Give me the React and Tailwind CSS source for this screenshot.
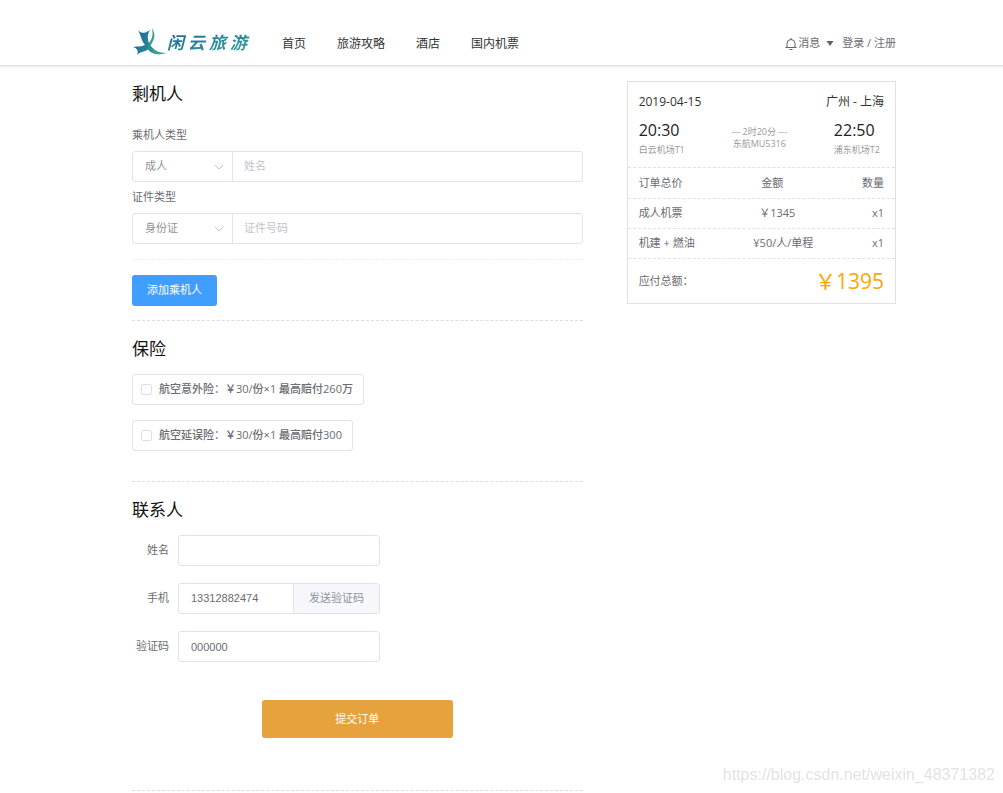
import React from "react";

const NAV = ["首页", "旅游攻略", "酒店", "国内机票"];

const INSURANCES = [
  { name: "航空意外险", detail: "￥30/份×1 最高赔付260万" },
  { name: "航空延误险", detail: "￥30/份×1 最高赔付300" },
];

const ROWS = [
  ["成人机票", "￥1345", "x1"],
  ["机建 + 燃油", "¥50/人/单程", "x1"],
];

function Logo() {
  return (
    <a href="#" aria-label="闲云旅游" className="flex items-center">
      <svg viewBox="0 0 35 30" className="h-[30px] w-[35px] shrink-0" aria-hidden="true">
        <defs>
          <linearGradient id="bird" x1="0" y1="0" x2="1" y2="0.4">
            <stop offset="0" stopColor="#1d5a9c" />
            <stop offset="0.5" stopColor="#247f96" />
            <stop offset="1" stopColor="#3fa894" />
          </linearGradient>
        </defs>
        <path
          fill="url(#bird)"
          d="M6 3C9 6.500 12 7 18 3C15 8 15.500 12 17 16C20 22 26 26 34 26C26 29 19 27 16 22.500C13 25 9 24 5 28C7 24 5 21 1 20C6 19 9 20 13 18C9 13 9 8 6 3Z"
        />
        <path fill="url(#bird)" d="M20 1C25.500 9 21 17.500 13 23.500L12 21C19 16 22 9 20 1Z" />
      </svg>
      <span className="flex gap-1 bg-gradient-to-br from-[#1f5f9e] to-[#3aa893] bg-clip-text pr-1 font-['Noto_Sans_CJK_SC',sans-serif] text-[17px] leading-6 font-bold text-transparent italic">
        <span>闲</span>
        <span>云</span>
        <span>旅</span>
        <span>游</span>
      </span>
    </a>
  );
}

function Chevron() {
  return (
    <svg viewBox="0 0 10 6" className="pointer-events-none absolute top-3 right-2 h-1.5 w-2.5" fill="none" stroke="#c0c4cc" aria-hidden="true">
      <path d="M1 1L5 5L9 1" />
    </svg>
  );
}

function PairField({ id, label, option, placeholder }) {
  return (
    <div>
      <label htmlFor={id} className="block leading-5">{label}</label>
      <div className="mt-1.5 flex h-[31px] rounded-[3px] border border-[#e0e3e9]">
        <div className="relative w-[100px] shrink-0 border-r border-[#e0e3e9]">
          <select aria-label={label} className="h-full w-full appearance-none bg-transparent pl-3 text-[#909399] outline-none">
            <option>{option}</option>
          </select>
          <Chevron />
        </div>
        <input id={id} placeholder={placeholder} className="min-w-0 flex-1 bg-transparent px-[11px] outline-none placeholder:text-[#c0c4cc]" />
      </div>
    </div>
  );
}

function Title({ children }) {
  return <h2 className="text-[17px] leading-6 text-[#111]">{children}</h2>;
}

function Header() {
  return (
    <header className="border-b border-[#dddddd] bg-white shadow-[0_2px_0_#f3f3f3]">
      <div className="flex h-[65px] items-center pt-[18px] pr-[107px] pl-[132px]">
        <Logo />
        <nav className="ml-[31px] flex gap-[31px] pt-1 text-[12px] text-[#333]">
          {NAV.map((item) => (
            <a key={item} href="#">{item}</a>
          ))}
        </nav>
        <div className="ml-auto flex items-center pt-1">
          <button type="button" className="flex items-center">
            <svg viewBox="0 0 14 14" className="h-3.5 w-3.5" fill="none" stroke="#606266" aria-hidden="true">
              <path d="M1.500 10.500H12.500M3 10.500V6.500A4 4 0 0 1 11 6.500V10.500M7 1V2.500M5.500 12.500H8.500" />
            </svg>
            消息
            <svg viewBox="0 0 8 5" className="ml-1.5 h-[5px] w-2" fill="#606266" aria-hidden="true">
              <path d="M0.500 0H7.500L4 5Z" />
            </svg>
          </button>
          <a href="#" className="ml-2">登录 / 注册</a>
        </div>
      </div>
    </header>
  );
}

function Summary() {
  const line = "flex items-center justify-between border-t border-dashed border-[#e2e2e2] px-[11px]";
  return (
    <aside className="self-start border border-[#e0e0e0]">
      <div className="px-[11px] pt-2.5 pb-[9px]">
        <div className="flex justify-between text-[12px] leading-5 text-[#333]">
          <span>2019-04-15</span>
          <span>广州 - 上海</span>
        </div>
        <div className="mt-1.5 flex items-center justify-between text-[9px] text-[#999]">
          <div>
            <div className="text-[16px] leading-6 text-[#222]">20:30</div>
            <div className="leading-4">白云机场T1</div>
          </div>
          <div className="text-center leading-3">
            <div>--- 2时20分 ---</div>
            <div>东航MU5316</div>
          </div>
          <div className="pr-1">
            <div className="text-[16px] leading-6 text-[#222]">22:50</div>
            <div className="leading-4">浦东机场T2</div>
          </div>
        </div>
      </div>
      <table className="block w-full">
        <thead className="block">
          <tr className={`h-[31px] ${line}`}>
            <th className="font-normal">订单总价</th>
            <th className="font-normal">金额</th>
            <th className="font-normal">数量</th>
          </tr>
        </thead>
        <tbody className="block">
          {ROWS.map(([name, price, count]) => (
            <tr key={name} className={`h-[30px] ${line}`}>
              <td>{name}</td>
              <td>{price}</td>
              <td>{count}</td>
            </tr>
          ))}
        </tbody>
      </table>
      <div className={`h-[45px] ${line}`}>
        <span>应付总额：</span>
        <span className="text-[21px] leading-8 text-[#ffa500]">￥1395</span>
      </div>
    </aside>
  );
}

export default function App() {
  const box = "h-[31px] rounded-[3px] border border-[#e0e3e9] bg-white px-3 font-['Liberation_Sans',sans-serif] outline-none";
  const row = "grid grid-cols-[37px_minmax(0,202px)] items-center gap-[9px]";
  return (
    <div className="min-h-screen bg-white font-['Open_Sans','Noto_Sans_CJK_SC',sans-serif] text-[11px] text-[#6a6c70]">
      <Header />
      <main className="grid grid-cols-[450fr_269fr] gap-x-11 pt-[15px] pr-[107px] pl-[132px]">
        <div className="pt-px">
          <section>
            <Title>剩机人</Title>
            <div className="mt-[19px] flex flex-col gap-[5px] border-b border-dashed border-[#eeeeee] pb-[15px]">
              <PairField id="passenger" label="乘机人类型" option="成人" placeholder="姓名" />
              <PairField id="document" label="证件类型" option="身份证" placeholder="证件号码" />
            </div>
            <button type="button" className="mt-[15px] h-[31px] rounded-[3px] bg-[#409eff] px-[15px] text-white">添加乘机人</button>
          </section>

          <section className="mt-[14px] border-t border-dashed border-[#dddddd] pt-4">
            <Title>保险</Title>
            <div className="mt-[13px] flex flex-col items-start gap-[15px]">
              {INSURANCES.map(({ name, detail }) => (
                <label key={name} className="flex h-[31px] items-center rounded-[3px] border border-[#e0e3e9] pr-[10px] pl-2 font-medium">
                  <input type="checkbox" className="mr-[7px] h-[11px] w-[11px] appearance-none rounded-[2px] border border-[#dcdfe6]" />
                  <span>{name}：{detail}</span>
                </label>
              ))}
            </div>
          </section>

          <section className="mt-[30px] border-t border-b border-dashed border-[#dddddd] pt-4 pb-[52px]">
            <Title>联系人</Title>
            <div className="mt-[13px] flex flex-col gap-[17px]">
              <div className={row}>
                <label htmlFor="name" className="text-right">姓名</label>
                <input id="name" className={box} />
              </div>
              <div className={row}>
                <label htmlFor="phone" className="text-right">手机</label>
                <div className="flex h-[31px] overflow-hidden rounded-[3px] border border-[#e0e3e9]">
                  <input id="phone" defaultValue="13312882474" className="min-w-0 flex-1 px-3 font-['Liberation_Sans',sans-serif] outline-none" />
                  <button type="button" className="border-l border-[#e0e3e9] bg-[#f5f7fa] px-[15px] text-[#909399]">发送验证码</button>
                </div>
              </div>
              <div className={row}>
                <label htmlFor="code" className="text-right">验证码</label>
                <input id="code" defaultValue="000000" className={box} />
              </div>
            </div>
            <button type="button" className="mx-auto mt-[38px] block h-[38px] w-[191px] rounded-[3px] bg-[#e6a23c] text-white">提交订单</button>
          </section>
        </div>
        <Summary />
      </main>
      <div className="fixed right-2 bottom-2 font-['Liberation_Sans',sans-serif] text-[16px] leading-5 text-[#e2e2e2]">
        https://blog.csdn.net/weixin_48371382
      </div>
    </div>
  );
}
